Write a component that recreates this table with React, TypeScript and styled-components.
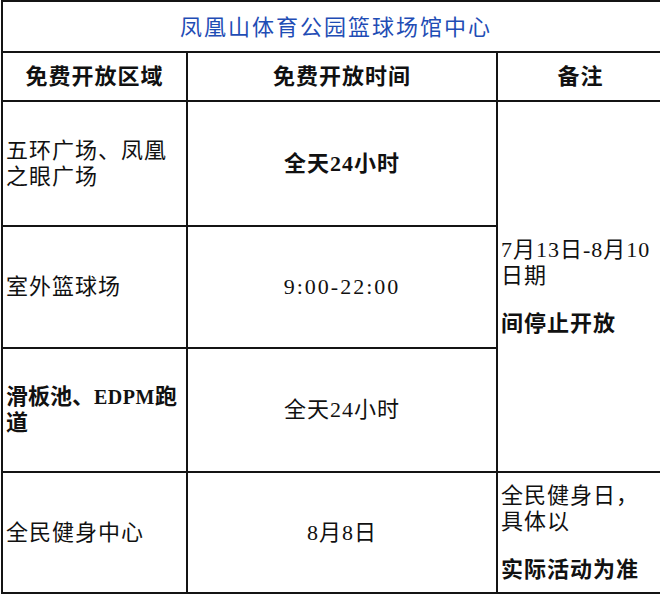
import React from "react";
import styled, { createGlobalStyle } from "styled-components";

const Global = createGlobalStyle`
  html, body {
    margin: 0;
    padding: 0;
    background: #ffffff;
    overflow: hidden;
  }
  body {
    font-family: "Liberation Serif", "Noto Sans CJK SC", serif;
    color: #111111;
  }
`;

const Table = styled.div`
  display: grid;
  grid-template-columns: 183px 308px 165px;
  grid-template-rows: 49px 47px 123px 120px 122px 119px;
  gap: 2px;
  padding: 2px;
  margin-left: 1px;
  width: max-content;
  background: #141414;
`;

const Cell = styled.div<{ $align?: "left" | "center"; $span?: number; $rows?: number }>`
  background: #ffffff;
  display: flex;
  flex-direction: column;
  justify-content: center;
  align-items: ${(p) => (p.$align === "left" ? "flex-start" : "center")};
  text-align: ${(p) => (p.$align === "left" ? "left" : "center")};
  padding: ${(p) => (p.$align === "left" ? "0 0 0 3px" : "0")};
  grid-column: ${(p) => (p.$span ? `span ${p.$span}` : "auto")};
  grid-row: ${(p) => (p.$rows ? `span ${p.$rows}` : "auto")};
  font-size: 22px;
  line-height: 26px;
  letter-spacing: 1px;
  white-space: nowrap;
  overflow: hidden;
`;

const Title = styled(Cell)`
  color: #1f4db5;
  letter-spacing: 2px;
  padding-left: 6px;
  padding-top: 2px;
`;

const Head = styled(Cell)`
  font-weight: 700;
`;

const Text = styled.p<{ $bold?: boolean; $gap?: number; $spacing?: number }>`
  margin: ${(p) => (p.$gap ? `${p.$gap}px 0 0 0` : "0")};
  font-weight: ${(p) => (p.$bold ? 700 : 400)};
  letter-spacing: ${(p) => (p.$spacing !== undefined ? `${p.$spacing}px` : "inherit")};
`;

const Narrow = styled.span`
  font-size: 20px;
  letter-spacing: 0.5px;
`;

export default function App() {
  return (
    <>
      <Global />
      <Table>
        <Title $span={3}>凤凰山体育公园篮球场馆中心</Title>

        <Head>免费开放区域</Head>
        <Head>免费开放时间</Head>
        <Head>备注</Head>

        <Cell $align="left">
          <Text>
            五环广场、凤凰
            <br />
            之眼广场
          </Text>
        </Cell>
        <Cell>
          <Text $bold>全天24小时</Text>
        </Cell>
        <Cell $align="left" $rows={3}>
          <Text>
            7月13日-8月10
            <br />
            日期
          </Text>
          <Text $bold $gap={22}>
            间停止开放
          </Text>
        </Cell>

        <Cell $align="left">
          <Text>室外篮球场</Text>
        </Cell>
        <Cell>
          <Text $spacing={2}>9:00-22:00</Text>
        </Cell>

        <Cell $align="left">
          <Text $bold $spacing={0}>
            滑板池、<Narrow>EDPM</Narrow>跑
            <br />
            道
          </Text>
        </Cell>
        <Cell>
          <Text>全天24小时</Text>
        </Cell>

        <Cell $align="left">
          <Text>全民健身中心</Text>
        </Cell>
        <Cell>
          <Text>8月8日</Text>
        </Cell>
        <Cell $align="left">
          <Text>
            全民健身日，
            <br />
            具体以
          </Text>
          <Text $bold $gap={22}>
            实际活动为准
          </Text>
        </Cell>
      </Table>
    </>
  );
}
